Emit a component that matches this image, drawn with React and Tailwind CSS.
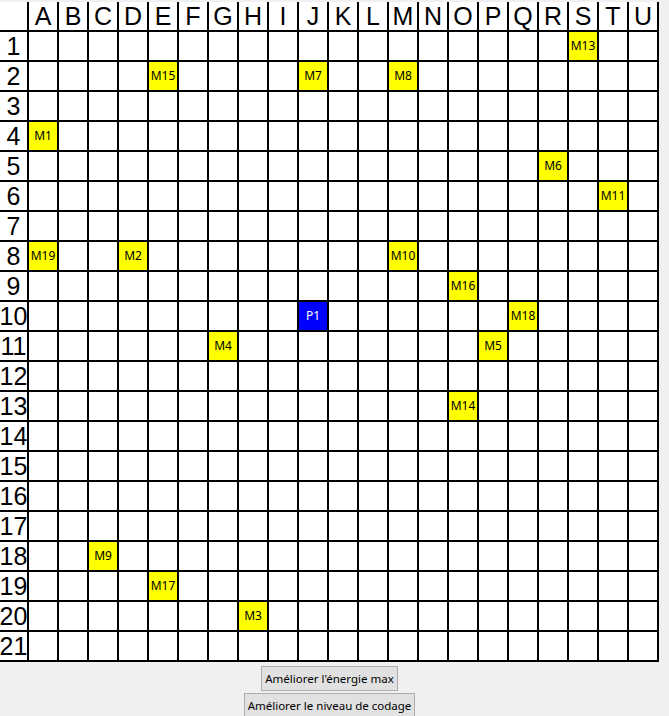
import React from "react";

const COLS = "ABCDEFGHIJKLMNOPQRSTU".split("");
const ROWS = Array.from({ length: 21 }, (_, i) => i + 1);

const MARKERS = {
  "S1": "M13",
  "E2": "M15",
  "J2": "M7",
  "M2": "M8",
  "A4": "M1",
  "R5": "M6",
  "T6": "M11",
  "A8": "M19",
  "D8": "M2",
  "M8": "M10",
  "O9": "M16",
  "J10": "P1",
  "Q10": "M18",
  "G11": "M4",
  "P11": "M5",
  "O13": "M14",
  "C18": "M9",
  "E19": "M17",
  "H20": "M3",
};

function Cell({ label }) {
  if (!label) {
    return <div className="h-[30px] border-r-2 border-b-2 border-black bg-white" />;
  }
  const isPlayer = label.startsWith("P");
  return (
    <div
      className={
        isPlayer
          ? "h-[30px] border-r-2 border-b-2 border-black bg-[#0000ff] text-white flex items-center justify-center text-[12px] font-['Noto_Sans',sans-serif]"
          : "h-[30px] border-r-2 border-b-2 border-black bg-[#ffff00] text-black flex items-center justify-center text-[12px] font-['Noto_Sans',sans-serif]"
      }
    >
      {label}
    </div>
  );
}

export default function App() {
  return (
    <div className="min-h-screen w-full bg-[#f0f0f0]">
      <div className="w-[659px] pt-[2px] flex flex-col items-center">
        <div className="grid grid-cols-[29px_repeat(21,30px)] bg-white">
          <div className="h-[30px] border-r-2 border-b-2 border-black bg-white" />
          {COLS.map((c) => (
            <div
              key={c}
              className="h-[30px] border-r-2 border-b-2 border-black bg-white flex items-center justify-center text-[25px] leading-none font-['Liberation_Sans',Arial,sans-serif] text-black"
            >
              {c}
            </div>
          ))}
          {ROWS.map((r) => (
            <React.Fragment key={r}>
              <div className="h-[30px] border-r-2 border-b-2 border-black bg-white flex items-center justify-center text-[25px] leading-none font-['Liberation_Sans',Arial,sans-serif] text-black overflow-hidden">
                {r}
              </div>
              {COLS.map((c) => (
                <Cell key={c + r} label={MARKERS[c + r]} />
              ))}
            </React.Fragment>
          ))}
        </div>
        <div className="mt-[4px] flex flex-col items-center gap-[2px]">
          <button className="w-[137px] h-[25px] bg-[#e1e1e1] border border-[#adadad] text-black text-[11.5px] whitespace-nowrap font-['Noto_Sans',sans-serif] flex items-center justify-center">
            Améliorer l'énergie max
          </button>
          <button className="w-[171px] h-[25px] bg-[#e1e1e1] border border-[#adadad] text-black text-[11.5px] whitespace-nowrap font-['Noto_Sans',sans-serif] flex items-center justify-center">
            Améliorer le niveau de codage
          </button>
        </div>
      </div>
    </div>
  );
}
